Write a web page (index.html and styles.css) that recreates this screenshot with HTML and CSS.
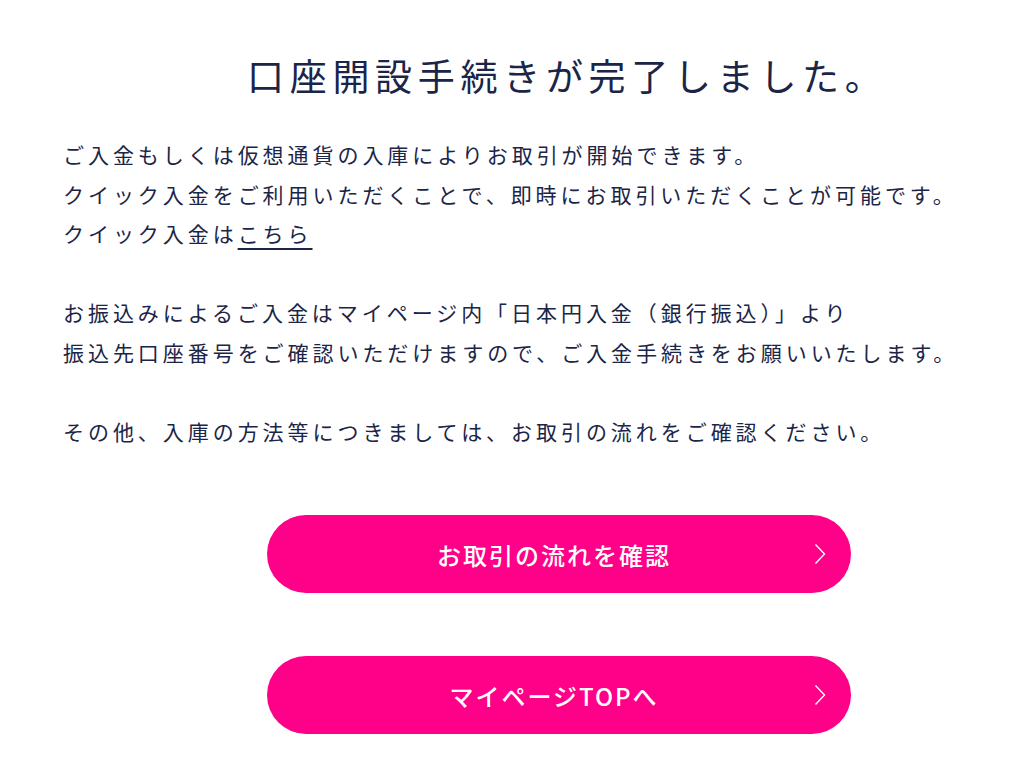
FILE: index.html
```html
<!DOCTYPE html>
<html lang="ja">
<head>
<meta charset="utf-8">
<link rel="stylesheet" href="styles.css">
</head>
<body>
<main class="page">
  <h1 class="title">口座開設手続きが完了しました。</h1>
  <div class="body">
    <p>ご入金もしくは仮想通貨の入庫によりお取引が開始できます。<br>クイック入金をご利用いただくことで、即時にお取引いただくことが可能です。<br>クイック入金は<a class="link" href="#">こちら</a></p>
    <p>お振込みによるご入金はマイページ内「日本円入金（銀行振込）」より<br>振込先口座番号をご確認いただけますので、ご入金手続きをお願いいたします。</p>
    <p>その他、入庫の方法等につきましては、お取引の流れをご確認ください。</p>
  </div>
  <div class="buttons">
    <a class="btn" href="#"><span>お取引の流れを確認</span><svg class="chev" viewBox="0 0 12 22" width="12" height="22"><path d="M1.5 1.5 L10.5 11 L1.5 20.5" fill="none" stroke="#fff" stroke-width="1.4"/></svg></a>
    <a class="btn" href="#"><span>マイページTOPへ</span><svg class="chev" viewBox="0 0 12 22" width="12" height="22"><path d="M1.5 1.5 L10.5 11 L1.5 20.5" fill="none" stroke="#fff" stroke-width="1.4"/></svg></a>
  </div>
</main>
</body>
</html>
```

FILE: styles.css
```css
html, body {
  margin: 0;
  padding: 0;
  background: #ffffff;
}
body {
  font-family: "Noto Sans CJK JP", "Noto Sans", sans-serif;
  color: #1b2547;
}
.page {
  width: 1024px;
  height: 774px;
  overflow: hidden;
}
.title {
  margin: 50px 0 0 247px;
  font-size: 37px;
  font-weight: 400;
  line-height: 50px;
  letter-spacing: 5.7px;
  white-space: nowrap;
}
.body {
  margin: 35px 0 0 63px;
  font-size: 21px;
  line-height: 39.5px;
  letter-spacing: 3.95px;
  white-space: nowrap;
}
.body p {
  margin: 0 0 39.5px 0;
}
.link {
  color: #1b2547;
  text-decoration: underline;
  text-underline-offset: 6px;
  text-decoration-thickness: 1.5px;
}
.buttons {
  margin: 64px 0 0 267px;
  display: flex;
  flex-direction: column;
  gap: 63px;
}
.btn {
  position: relative;
  width: 584px;
  height: 78px;
  border-radius: 39px;
  background: #ff0088;
  color: #ffffff;
  text-decoration: none;
  display: flex;
  align-items: center;
  justify-content: center;
  font-size: 24px;
  font-weight: 500;
  letter-spacing: 2px;
  padding-right: 10px;
  box-sizing: border-box;
}
.chev {
  position: absolute;
  right: 25px;
  top: 28px;
}
```
